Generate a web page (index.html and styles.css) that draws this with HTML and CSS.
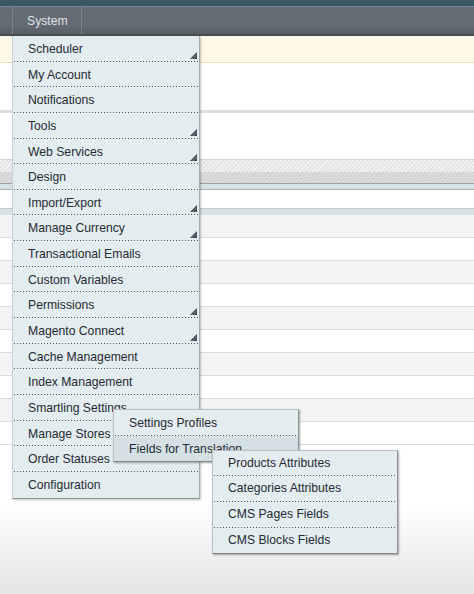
FILE: index.html
```html
<!DOCTYPE html>
<html>
<head>
<meta charset="utf-8">
<link rel="stylesheet" href="styles.css">
</head>
<body>
<header class="header">
  <div class="topstrip"></div>
  <nav class="navbar">
    <ul class="nav">
      <li class="nav-item">System
        <ul class="menu">
          <li class="mi has-sub">Scheduler<svg class="arr" viewBox="0 0 7 7"><polygon points="0,7 7,0 7,7"/><line x1="2.5" y1="7" x2="7" y2="2.5"/></svg></li>
          <li class="mi">My Account</li>
          <li class="mi">Notifications</li>
          <li class="mi has-sub">Tools<svg class="arr" viewBox="0 0 7 7"><polygon points="0,7 7,0 7,7"/><line x1="2.5" y1="7" x2="7" y2="2.5"/></svg></li>
          <li class="mi has-sub">Web Services<svg class="arr" viewBox="0 0 7 7"><polygon points="0,7 7,0 7,7"/><line x1="2.5" y1="7" x2="7" y2="2.5"/></svg></li>
          <li class="mi">Design</li>
          <li class="mi has-sub">Import/Export<svg class="arr" viewBox="0 0 7 7"><polygon points="0,7 7,0 7,7"/><line x1="2.5" y1="7" x2="7" y2="2.5"/></svg></li>
          <li class="mi has-sub">Manage Currency<svg class="arr" viewBox="0 0 7 7"><polygon points="0,7 7,0 7,7"/><line x1="2.5" y1="7" x2="7" y2="2.5"/></svg></li>
          <li class="mi">Transactional Emails</li>
          <li class="mi">Custom Variables</li>
          <li class="mi has-sub">Permissions<svg class="arr" viewBox="0 0 7 7"><polygon points="0,7 7,0 7,7"/><line x1="2.5" y1="7" x2="7" y2="2.5"/></svg></li>
          <li class="mi has-sub">Magento Connect<svg class="arr" viewBox="0 0 7 7"><polygon points="0,7 7,0 7,7"/><line x1="2.5" y1="7" x2="7" y2="2.5"/></svg></li>
          <li class="mi">Cache Management</li>
          <li class="mi">Index Management</li>
          <li class="mi">Smartling Settings
            <ul class="submenu sub1">
              <li class="si">Settings Profiles</li>
              <li class="si active">Fields for Translation
                <ul class="submenu sub2">
                  <li class="si">Products Attributes</li>
                  <li class="si">Categories Attributes</li>
                  <li class="si">CMS Pages Fields</li>
                  <li class="si">CMS Blocks Fields</li>
                </ul>
              </li>
            </ul>
          </li>
          <li class="mi">Manage Stores</li>
          <li class="mi">Order Statuses</li>
          <li class="mi">Configuration</li>
        </ul>
      </li>
    </ul>
  </nav>
</header>
<main class="page">
  <div class="notice"></div>
  <div class="gap gap-a"></div>
  <div class="band"></div>
  <div class="gap gap-b"></div>
  <div class="section-head">
    <div class="hatch-light"></div>
    <div class="hatch-dark"></div>
    <div class="blue-strip"></div>
  </div>
  <div class="gap gap-c"></div>
  <div class="blue-strip2"></div>
  <div class="rows">
    <div class="row odd"></div>
    <div class="row"></div>
    <div class="row odd"></div>
    <div class="row"></div>
    <div class="row odd"></div>
    <div class="row"></div>
    <div class="row odd"></div>
    <div class="row"></div>
    <div class="row odd"></div>
    <div class="row"></div>
  </div>
</main>
</body>
</html>
```
FILE: styles.css
```css
html, body {
  margin: 0;
  padding: 0;
  height: 594px;
  overflow: hidden;
}
body {
  font-family: "Liberation Sans", Arial, sans-serif;
  font-size: 12px;
  background: linear-gradient(to bottom, #ffffff 0, #ffffff 505px, #e5e5e5 594px);
}
.header {
  position: relative;
  z-index: 5;
}
.topstrip {
  height: 6px;
  background: #3a5862;
  border-bottom: 1px solid #6b8790;
}
.navbar {
  height: 27px;
  background: linear-gradient(to bottom, #666d74 0, #646b72 70%, #575d63 100%);
  border-bottom: 2px solid #474c52;
}
.nav {
  list-style: none;
  margin: 0 0 0 12px;
  padding: 0;
  display: flex;
  height: 27px;
}
.nav-item {
  position: relative;
  padding: 0 13px 0 14px;
  border-left: 1px solid #7b8288;
  border-right: 1px solid #7b8288;
  color: #dde2e6;
  line-height: 28px;
  font-size: 12.2px;
}
.menu {
  position: absolute;
  top: 29px;
  left: -1px;
  width: 186px;
  margin: 0;
  padding: 0;
  list-style: none;
  background: #e3ecef;
  border-left: 1px solid #c9d0d3;
  border-right: 1px solid #a5abaf;
  border-bottom: 1px solid #8e9498;
  box-shadow: 1px 1px 2px rgba(0, 0, 0, 0.25);
  color: #262b33;
  font-size: 12.2px;
  line-height: normal;
}
.mi, .si {
  position: relative;
  box-sizing: border-box;
  padding-left: 15px;
  padding-top: 1px;
  white-space: nowrap;
  background-image: linear-gradient(to right, #50565c 0, #50565c 1px, transparent 1px, transparent 3px);
  background-size: 3px 1px;
  background-repeat: repeat-x;
  background-position: 1px 100%;
}
.mi {
  height: 25.65px;
  line-height: 24.6px;
}
.mi:last-child, .si:last-child {
  background-image: none;
}
.arr {
  position: absolute;
  right: 2px;
  bottom: 3px;
  width: 7px;
  height: 7px;
}
.arr polygon {
  fill: #3e4850;
}
.arr line {
  stroke: #8f9aa1;
  stroke-width: 0.8;
}
.submenu {
  position: absolute;
  left: 100px;
  top: 14px;
  width: 184px;
  margin: 0;
  padding: 0;
  list-style: none;
  background: #e3ecef;
  border: 1px solid #b9c0c3;
  border-right-color: #8d9296;
  border-bottom-color: #7f8488;
  box-shadow: 1px 1px 2px rgba(0, 0, 0, 0.35);
  color: #262b33;
  z-index: 2;
}
.sub2 {
  left: 98px;
  top: 14px;
}
.si {
  height: 25.7px;
  line-height: 24.7px;
}
.sub2 .si {
  padding-top: 0;
}
.si.active {
  background-color: #d4e0e4;
}
.page {
  display: flex;
  flex-direction: column;
}
.notice {
  height: 26px;
  background: #fef8e7;
  border-bottom: 1px solid #ebdfbc;
}
.gap-a { height: 47px; }
.band {
  height: 3px;
  background: #dedede;
}
.gap-b { height: 46px; }
.section-head {
  border-top: 1px solid #d2d2d2;
}
.hatch-light {
  height: 12px;
  background: repeating-linear-gradient(-45deg, #f2f2f2 0, #f2f2f2 1.5px, #e3e3e3 1.5px, #e3e3e3 3px);
}
.hatch-dark {
  height: 11px;
  background: repeating-linear-gradient(-45deg, #dddddd 0, #dddddd 1.5px, #d3d3d3 1.5px, #d3d3d3 3px);
  border-bottom: 1px solid #9ba3a6;
}
.blue-strip {
  height: 5px;
  background: #d6e3e6;
  border-bottom: 1px solid #a8b3b6;
}
.gap-c { height: 18px; }
.blue-strip2 {
  height: 6px;
  background: #d7e3e6;
  border-top: 1px solid #bfc8cb;
}
.row {
  height: 22px;
  border-bottom: 1px solid #dcdcdc;
  background: #ffffff;
}
.row.odd {
  background: #f4f4f4;
}
```
